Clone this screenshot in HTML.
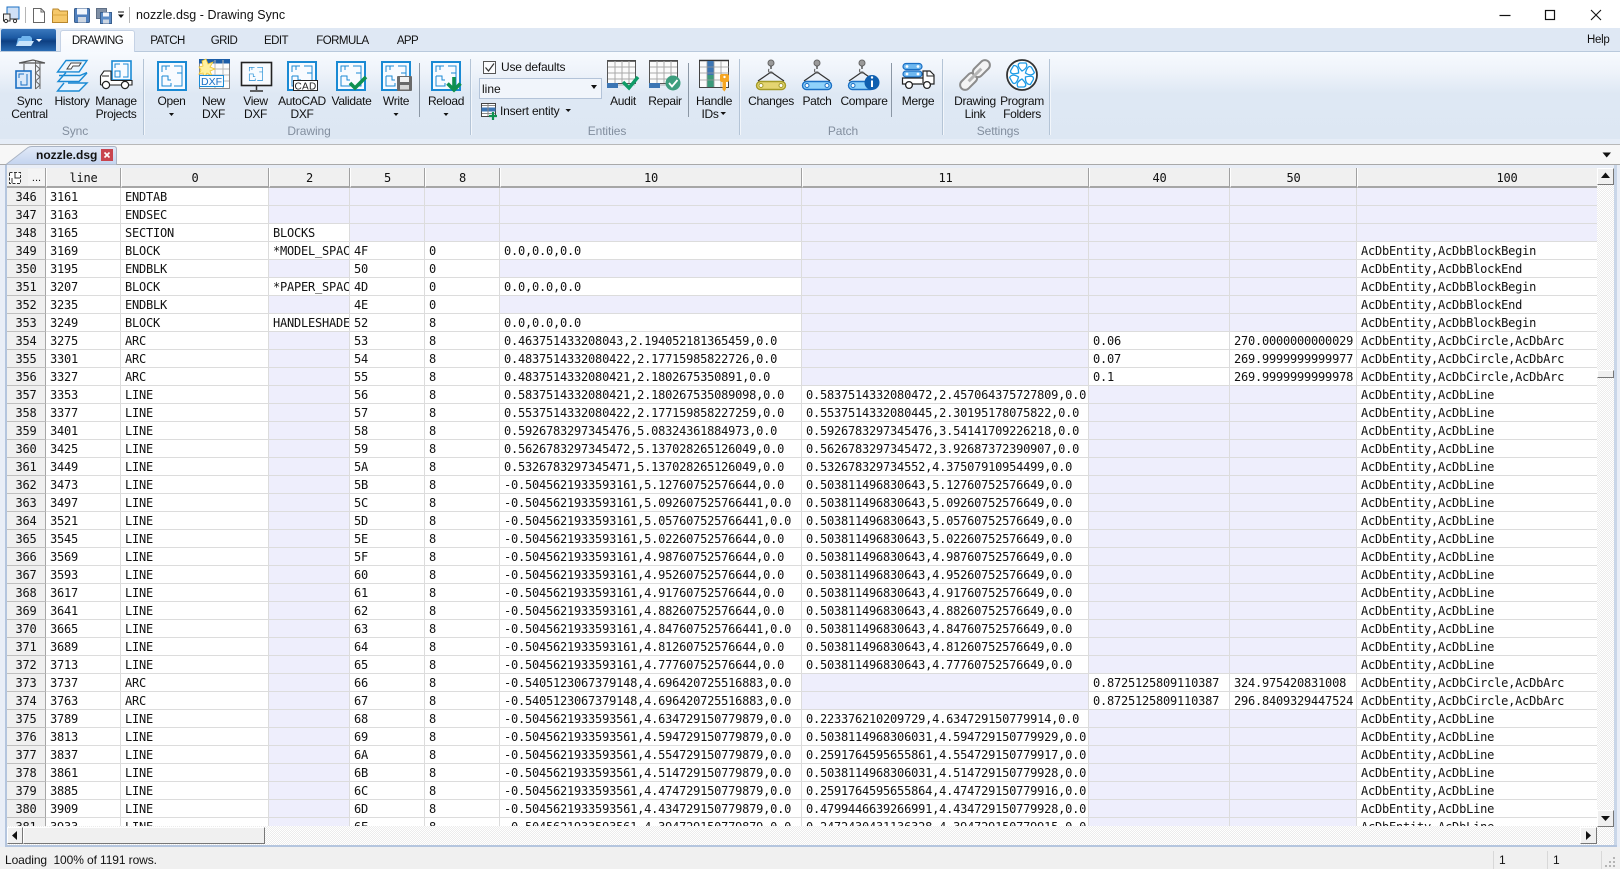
<!DOCTYPE html>
<html>
<head>
<meta charset="utf-8">
<title>nozzle.dsg - Drawing Sync</title>
<style>
html,body{margin:0;padding:0;width:1620px;height:869px;overflow:hidden;background:#fff}
body{position:relative;font-family:"Liberation Sans",sans-serif;font-size:12px;color:#111}
.a{position:absolute}
.lb{position:absolute;transform:translateX(-50%);white-space:nowrap;text-align:center;font-size:12px;letter-spacing:-.32px;line-height:13px;color:#111}
.g{position:absolute;transform:translateX(-50%);white-space:nowrap;font-size:12px;letter-spacing:-.1px;color:#828e9e;line-height:14px;top:124px}
.t{position:absolute;transform:translateX(-50%);white-space:nowrap;font-size:11.5px;letter-spacing:-.55px;top:34px;line-height:14px;color:#111}
.gs{position:absolute;top:59px;height:76px;width:1px;background:#b4c4d6;box-shadow:1px 0 0 #f2f6fb}
.is{position:absolute;top:63px;height:54px;width:1px;background:#8b97a5}
.btn{position:absolute;background:#f0f0f0;border-left:1px solid #fff;border-top:1px solid #fff;border-right:1px solid #777;border-bottom:1px solid #777;box-sizing:border-box}
.dith{background:repeating-conic-gradient(#fff 0 25%,#ececec 0 50%) 0 0/2px 2px}
table{border-collapse:separate;border-spacing:0;table-layout:fixed;width:1650px;font-family:"DejaVu Sans Mono","Liberation Mono",monospace;font-size:12px;letter-spacing:-.22px;color:#111}
td,th{box-sizing:border-box;height:18px;padding:2px 0 0 4px;overflow:hidden;white-space:nowrap;font-weight:normal;text-align:left;border-right:1px solid #dcdcdc;border-bottom:1px solid #dcdcdc;line-height:15px;background:#fff}
td.e{background:#eeeefc}
th.r{background:#f0f0f0;text-align:center;padding:2px 0 0;border-right:1px solid #a6a6a6;border-bottom:1px solid #c0c0c0}
thead th{height:20px;background:#f0f0f0;text-align:center;padding:2px 0 0;border-left:1px solid #fff;border-right:1px solid #a0a0a0;border-bottom:2px solid #a6a6a6;line-height:16px}
</style>
</head>
<body>

<!-- ribbon backgrounds -->
<div class="a" style="left:0;top:28px;width:1620px;height:23px;background:#dfe8f4"></div>
<div class="a" style="left:0;top:51px;width:1620px;height:1px;background:#b9c9dc"></div>
<div class="a" style="left:0;top:52px;width:1620px;height:87px;background:linear-gradient(#f7fafe 0,#eef3fa 20px,#dee8f4 42px,#dde7f3 100%)"></div>
<div class="a" style="left:0;top:139px;width:1620px;height:5px;background:#e6edf7"></div>

<!-- file button and tabs -->
<div class="a" style="left:1px;top:29px;width:55px;height:22px;border-radius:2px 2px 0 0;background:linear-gradient(#3a78bd 0,#1c5aa3 40%,#0e3f82 55%,#2a6cb4 100%)"></div>
<div class="a" style="left:60px;top:30px;width:75px;height:22px;box-sizing:border-box;border:1px solid #c5d2e5;border-bottom:0;border-radius:3px 3px 0 0;background:linear-gradient(#fff,#f6f9fe)"></div>
<div class="t" style="left:97.5px">DRAWING</div>
<div class="t" style="left:167.5px">PATCH</div>
<div class="t" style="left:224px">GRID</div>
<div class="t" style="left:276px">EDIT</div>
<div class="t" style="left:342.5px">FORMULA</div>
<div class="t" style="left:407.5px">APP</div>
<div class="a" style="left:1587px;top:33px;font-size:11.5px;letter-spacing:-.3px;line-height:14px">Help</div>

<!-- title -->
<div class="a" style="left:136px;top:8px;font-size:12.5px;line-height:15px;white-space:nowrap;letter-spacing:.05px">nozzle.dsg - Drawing Sync</div>

<!-- separators -->
<div class="gs" style="left:143px"></div>
<div class="gs" style="left:470px"></div>
<div class="gs" style="left:739px"></div>
<div class="gs" style="left:942px"></div>
<div class="gs" style="left:1049px"></div>
<div class="is" style="left:419px"></div>
<div class="is" style="left:688px"></div>
<div class="is" style="left:891px"></div>

<!-- labels -->
<div class="lb" style="left:29.5px;top:95px">Sync<br>Central</div>
<div class="lb" style="left:72px;top:95px">History</div>
<div class="lb" style="left:116px;top:95px">Manage<br>Projects</div>
<div class="lb" style="left:171.5px;top:95px">Open</div>
<div class="lb" style="left:213.5px;top:95px">New<br>DXF</div>
<div class="lb" style="left:255.5px;top:95px">View<br>DXF</div>
<div class="lb" style="left:302px;top:95px">AutoCAD<br>DXF</div>
<div class="lb" style="left:351.5px;top:95px">Validate</div>
<div class="lb" style="left:396px;top:95px">Write</div>
<div class="lb" style="left:446px;top:95px">Reload</div>
<div class="lb" style="left:623px;top:95px">Audit</div>
<div class="lb" style="left:665px;top:95px">Repair</div>
<div class="lb" style="left:714px;top:95px">Handle</div>
<div class="lb" style="left:710px;top:108px">IDs</div>
<div class="lb" style="left:771px;top:95px">Changes</div>
<div class="lb" style="left:817px;top:95px">Patch</div>
<div class="lb" style="left:864px;top:95px">Compare</div>
<div class="lb" style="left:918px;top:95px">Merge</div>
<div class="lb" style="left:975px;top:95px">Drawing<br>Link</div>
<div class="lb" style="left:1022px;top:95px">Program<br>Folders</div>
<div class="g" style="left:75px">Sync</div>
<div class="g" style="left:309px">Drawing</div>
<div class="g" style="left:607px">Entities</div>
<div class="g" style="left:843px">Patch</div>
<div class="g" style="left:998px">Settings</div>

<!-- entities controls -->
<div class="a" style="left:483px;top:61px;width:13px;height:13px;box-sizing:border-box;border:1px solid #555;background:#fbfcfe"></div>
<div class="a" style="left:501px;top:60px;font-size:12px;letter-spacing:-.2px;line-height:14px">Use defaults</div>
<div class="a" style="left:479px;top:78px;width:123px;height:21px;box-sizing:border-box;border:1px solid #b3c3d8;background:#f1f5fb"></div>
<div class="a" style="left:482px;top:82px;font-size:12px;line-height:14px">line</div>
<div class="a" style="left:500px;top:104px;font-size:12px;letter-spacing:-.2px;line-height:14px">Insert entity</div>

<!-- doc tab strip -->
<div class="a" style="left:0;top:144px;width:1620px;height:1px;background:#b8b8b8"></div>
<div class="a" style="left:0;top:145px;width:1620px;height:19px;background:#f7f7f7"></div>
<div class="a" style="left:0;top:164px;width:1620px;height:1px;background:#a9a9a9"></div>
<div class="a" style="left:0;top:165px;width:1620px;height:685px;background:#e9eef7"></div>
<div class="a" style="left:5px;top:165px;width:2px;height:682px;background:#b4c5de"></div>
<div class="a" style="left:1614px;top:165px;width:3px;height:682px;background:#c9d6e8"></div>
<div class="a" style="left:5px;top:845px;width:1612px;height:2px;background:#b4c5de"></div>

<!-- grid -->
<div class="a dith" style="left:1597px;top:168px;width:17px;height:677px"></div>
<div class="a dith" style="left:7px;top:826px;width:1590px;height:19px"></div>
<div class="a" style="left:7px;top:168px;width:1590px;height:658px;overflow:hidden;background:#fff">
<table>
<colgroup><col style="width:39px"><col style="width:75px"><col style="width:148px"><col style="width:81px"><col style="width:75px"><col style="width:75px"><col style="width:302px"><col style="width:287px"><col style="width:141px"><col style="width:127px"><col style="width:300px"></colgroup>
<thead><tr><th></th><th>line</th><th>0</th><th>2</th><th>5</th><th>8</th><th>10</th><th>11</th><th>40</th><th>50</th><th>100</th></tr></thead>
<tbody>
<tr><th class="r">346</th><td>3161</td><td>ENDTAB</td><td class="e"></td><td class="e"></td><td class="e"></td><td class="e"></td><td class="e"></td><td class="e"></td><td class="e"></td><td class="e"></td></tr>
<tr><th class="r">347</th><td>3163</td><td>ENDSEC</td><td class="e"></td><td class="e"></td><td class="e"></td><td class="e"></td><td class="e"></td><td class="e"></td><td class="e"></td><td class="e"></td></tr>
<tr><th class="r">348</th><td>3165</td><td>SECTION</td><td>BLOCKS</td><td class="e"></td><td class="e"></td><td class="e"></td><td class="e"></td><td class="e"></td><td class="e"></td><td class="e"></td></tr>
<tr><th class="r">349</th><td>3169</td><td>BLOCK</td><td>*MODEL_SPACE</td><td>4F</td><td>0</td><td>0.0,0.0,0.0</td><td class="e"></td><td class="e"></td><td class="e"></td><td>AcDbEntity,AcDbBlockBegin</td></tr>
<tr><th class="r">350</th><td>3195</td><td>ENDBLK</td><td class="e"></td><td>50</td><td>0</td><td class="e"></td><td class="e"></td><td class="e"></td><td class="e"></td><td>AcDbEntity,AcDbBlockEnd</td></tr>
<tr><th class="r">351</th><td>3207</td><td>BLOCK</td><td>*PAPER_SPACE</td><td>4D</td><td>0</td><td>0.0,0.0,0.0</td><td class="e"></td><td class="e"></td><td class="e"></td><td>AcDbEntity,AcDbBlockBegin</td></tr>
<tr><th class="r">352</th><td>3235</td><td>ENDBLK</td><td class="e"></td><td>4E</td><td>0</td><td class="e"></td><td class="e"></td><td class="e"></td><td class="e"></td><td>AcDbEntity,AcDbBlockEnd</td></tr>
<tr><th class="r">353</th><td>3249</td><td>BLOCK</td><td>HANDLESHADE</td><td>52</td><td>8</td><td>0.0,0.0,0.0</td><td class="e"></td><td class="e"></td><td class="e"></td><td>AcDbEntity,AcDbBlockBegin</td></tr>
<tr><th class="r">354</th><td>3275</td><td>ARC</td><td class="e"></td><td>53</td><td>8</td><td>0.463751433208043,2.194052181365459,0.0</td><td class="e"></td><td>0.06</td><td>270.0000000000029</td><td>AcDbEntity,AcDbCircle,AcDbArc</td></tr>
<tr><th class="r">355</th><td>3301</td><td>ARC</td><td class="e"></td><td>54</td><td>8</td><td>0.4837514332080422,2.17715985822726,0.0</td><td class="e"></td><td>0.07</td><td>269.9999999999977</td><td>AcDbEntity,AcDbCircle,AcDbArc</td></tr>
<tr><th class="r">356</th><td>3327</td><td>ARC</td><td class="e"></td><td>55</td><td>8</td><td>0.4837514332080421,2.1802675350891,0.0</td><td class="e"></td><td>0.1</td><td>269.9999999999978</td><td>AcDbEntity,AcDbCircle,AcDbArc</td></tr>
<tr><th class="r">357</th><td>3353</td><td>LINE</td><td class="e"></td><td>56</td><td>8</td><td>0.5837514332080421,2.180267535089098,0.0</td><td>0.5837514332080472,2.457064375727809,0.0</td><td class="e"></td><td class="e"></td><td>AcDbEntity,AcDbLine</td></tr>
<tr><th class="r">358</th><td>3377</td><td>LINE</td><td class="e"></td><td>57</td><td>8</td><td>0.5537514332080422,2.177159858227259,0.0</td><td>0.5537514332080445,2.30195178075822,0.0</td><td class="e"></td><td class="e"></td><td>AcDbEntity,AcDbLine</td></tr>
<tr><th class="r">359</th><td>3401</td><td>LINE</td><td class="e"></td><td>58</td><td>8</td><td>0.5926783297345476,5.08324361884973,0.0</td><td>0.5926783297345476,3.54141709226218,0.0</td><td class="e"></td><td class="e"></td><td>AcDbEntity,AcDbLine</td></tr>
<tr><th class="r">360</th><td>3425</td><td>LINE</td><td class="e"></td><td>59</td><td>8</td><td>0.5626783297345472,5.137028265126049,0.0</td><td>0.5626783297345472,3.92687372390907,0.0</td><td class="e"></td><td class="e"></td><td>AcDbEntity,AcDbLine</td></tr>
<tr><th class="r">361</th><td>3449</td><td>LINE</td><td class="e"></td><td>5A</td><td>8</td><td>0.5326783297345471,5.137028265126049,0.0</td><td>0.532678329734552,4.37507910954499,0.0</td><td class="e"></td><td class="e"></td><td>AcDbEntity,AcDbLine</td></tr>
<tr><th class="r">362</th><td>3473</td><td>LINE</td><td class="e"></td><td>5B</td><td>8</td><td>-0.5045621933593161,5.12760752576644,0.0</td><td>0.503811496830643,5.12760752576649,0.0</td><td class="e"></td><td class="e"></td><td>AcDbEntity,AcDbLine</td></tr>
<tr><th class="r">363</th><td>3497</td><td>LINE</td><td class="e"></td><td>5C</td><td>8</td><td>-0.5045621933593161,5.092607525766441,0.0</td><td>0.503811496830643,5.09260752576649,0.0</td><td class="e"></td><td class="e"></td><td>AcDbEntity,AcDbLine</td></tr>
<tr><th class="r">364</th><td>3521</td><td>LINE</td><td class="e"></td><td>5D</td><td>8</td><td>-0.5045621933593161,5.057607525766441,0.0</td><td>0.503811496830643,5.05760752576649,0.0</td><td class="e"></td><td class="e"></td><td>AcDbEntity,AcDbLine</td></tr>
<tr><th class="r">365</th><td>3545</td><td>LINE</td><td class="e"></td><td>5E</td><td>8</td><td>-0.5045621933593161,5.02260752576644,0.0</td><td>0.503811496830643,5.02260752576649,0.0</td><td class="e"></td><td class="e"></td><td>AcDbEntity,AcDbLine</td></tr>
<tr><th class="r">366</th><td>3569</td><td>LINE</td><td class="e"></td><td>5F</td><td>8</td><td>-0.5045621933593161,4.98760752576644,0.0</td><td>0.503811496830643,4.98760752576649,0.0</td><td class="e"></td><td class="e"></td><td>AcDbEntity,AcDbLine</td></tr>
<tr><th class="r">367</th><td>3593</td><td>LINE</td><td class="e"></td><td>60</td><td>8</td><td>-0.5045621933593161,4.95260752576644,0.0</td><td>0.503811496830643,4.95260752576649,0.0</td><td class="e"></td><td class="e"></td><td>AcDbEntity,AcDbLine</td></tr>
<tr><th class="r">368</th><td>3617</td><td>LINE</td><td class="e"></td><td>61</td><td>8</td><td>-0.5045621933593161,4.91760752576644,0.0</td><td>0.503811496830643,4.91760752576649,0.0</td><td class="e"></td><td class="e"></td><td>AcDbEntity,AcDbLine</td></tr>
<tr><th class="r">369</th><td>3641</td><td>LINE</td><td class="e"></td><td>62</td><td>8</td><td>-0.5045621933593161,4.88260752576644,0.0</td><td>0.503811496830643,4.88260752576649,0.0</td><td class="e"></td><td class="e"></td><td>AcDbEntity,AcDbLine</td></tr>
<tr><th class="r">370</th><td>3665</td><td>LINE</td><td class="e"></td><td>63</td><td>8</td><td>-0.5045621933593161,4.847607525766441,0.0</td><td>0.503811496830643,4.84760752576649,0.0</td><td class="e"></td><td class="e"></td><td>AcDbEntity,AcDbLine</td></tr>
<tr><th class="r">371</th><td>3689</td><td>LINE</td><td class="e"></td><td>64</td><td>8</td><td>-0.5045621933593161,4.81260752576644,0.0</td><td>0.503811496830643,4.81260752576649,0.0</td><td class="e"></td><td class="e"></td><td>AcDbEntity,AcDbLine</td></tr>
<tr><th class="r">372</th><td>3713</td><td>LINE</td><td class="e"></td><td>65</td><td>8</td><td>-0.5045621933593161,4.77760752576644,0.0</td><td>0.503811496830643,4.77760752576649,0.0</td><td class="e"></td><td class="e"></td><td>AcDbEntity,AcDbLine</td></tr>
<tr><th class="r">373</th><td>3737</td><td>ARC</td><td class="e"></td><td>66</td><td>8</td><td>-0.5405123067379148,4.696420725516883,0.0</td><td class="e"></td><td>0.8725125809110387</td><td>324.975420831008</td><td>AcDbEntity,AcDbCircle,AcDbArc</td></tr>
<tr><th class="r">374</th><td>3763</td><td>ARC</td><td class="e"></td><td>67</td><td>8</td><td>-0.5405123067379148,4.696420725516883,0.0</td><td class="e"></td><td>0.8725125809110387</td><td>296.8409329447524</td><td>AcDbEntity,AcDbCircle,AcDbArc</td></tr>
<tr><th class="r">375</th><td>3789</td><td>LINE</td><td class="e"></td><td>68</td><td>8</td><td>-0.5045621933593561,4.634729150779879,0.0</td><td>0.223376210209729,4.634729150779914,0.0</td><td class="e"></td><td class="e"></td><td>AcDbEntity,AcDbLine</td></tr>
<tr><th class="r">376</th><td>3813</td><td>LINE</td><td class="e"></td><td>69</td><td>8</td><td>-0.5045621933593561,4.594729150779879,0.0</td><td>0.5038114968306031,4.594729150779929,0.0</td><td class="e"></td><td class="e"></td><td>AcDbEntity,AcDbLine</td></tr>
<tr><th class="r">377</th><td>3837</td><td>LINE</td><td class="e"></td><td>6A</td><td>8</td><td>-0.5045621933593561,4.554729150779879,0.0</td><td>0.2591764595655861,4.554729150779917,0.0</td><td class="e"></td><td class="e"></td><td>AcDbEntity,AcDbLine</td></tr>
<tr><th class="r">378</th><td>3861</td><td>LINE</td><td class="e"></td><td>6B</td><td>8</td><td>-0.5045621933593561,4.514729150779879,0.0</td><td>0.5038114968306031,4.514729150779928,0.0</td><td class="e"></td><td class="e"></td><td>AcDbEntity,AcDbLine</td></tr>
<tr><th class="r">379</th><td>3885</td><td>LINE</td><td class="e"></td><td>6C</td><td>8</td><td>-0.5045621933593561,4.474729150779879,0.0</td><td>0.2591764595655864,4.474729150779916,0.0</td><td class="e"></td><td class="e"></td><td>AcDbEntity,AcDbLine</td></tr>
<tr><th class="r">380</th><td>3909</td><td>LINE</td><td class="e"></td><td>6D</td><td>8</td><td>-0.5045621933593561,4.434729150779879,0.0</td><td>0.4799446639266991,4.434729150779928,0.0</td><td class="e"></td><td class="e"></td><td>AcDbEntity,AcDbLine</td></tr>
<tr><th class="r">381</th><td>3933</td><td>LINE</td><td class="e"></td><td>6E</td><td>8</td><td>-0.5045621933593561,4.394729150779879,0.0</td><td>0.2472430431136328,4.394729150779915,0.0</td><td class="e"></td><td class="e"></td><td>AcDbEntity,AcDbLine</td></tr>
</tbody>
</table>
</div>

<!-- top-left header cell -->
<div class="a" style="left:7px;top:168px;width:39px;height:20px;box-sizing:border-box;background:#f0f0f0;border-right:1px solid #a0a0a0;border-bottom:2px solid #a6a6a6"></div>
<div class="a" style="left:28px;top:169px;width:17px;height:17px;background:#f4f4f4;font-size:11px;line-height:18px;text-align:center;font-family:'Liberation Sans',sans-serif">...</div>

<!-- scrollbars -->
<div class="btn" style="left:1597px;top:168px;width:17px;height:17px"></div>
<div class="btn" style="left:1597px;top:370px;width:17px;height:8px"></div>
<div class="btn" style="left:1597px;top:810px;width:17px;height:17px"></div>
<div class="btn" style="left:7px;top:827px;width:16px;height:17px"></div>
<div class="btn" style="left:23px;top:827px;width:242px;height:17px"></div>
<div class="btn" style="left:1580px;top:827px;width:17px;height:17px"></div>

<!-- status bar -->
<div class="a" style="left:0;top:847px;width:1620px;height:22px;background:#f0f0f0"></div>
<div class="a" style="left:5px;top:853px;font-size:12px;line-height:14px;white-space:nowrap;letter-spacing:-.1px">Loading&nbsp; 100% of 1191 rows.</div>
<div class="a" style="left:1493px;top:851px;width:1px;height:18px;background:#d8d8d8"></div>
<div class="a" style="left:1547px;top:851px;width:1px;height:18px;background:#d8d8d8"></div>
<div class="a" style="left:1601px;top:851px;width:1px;height:18px;background:#d8d8d8"></div>
<div class="a" style="left:1499px;top:853px;font-size:12px;line-height:14px">1</div>
<div class="a" style="left:1553px;top:853px;font-size:12px;line-height:14px">1</div>

<!-- all icons, drawn in page coordinates -->
<svg class="a" style="left:0;top:0" width="1620" height="869" viewBox="0 0 1620 869" fill="none">
<defs>
<g id="plan" stroke="#1a8ad4" stroke-width="1" fill="none">
<path d="M5 11V5H13M9 5V9M17 5H25V25H17M25 12H20M5 15H11V19H14M5 15V25H14V22"/>
</g>
<g id="bp">
<rect x="1" y="1" width="28" height="28" fill="#f8fbff" stroke="#1a8ad4" stroke-width="2"/>
<use href="#plan"/>
</g>
<g id="sheet">
<rect x=".5" y=".5" width="28" height="23" fill="#fbfbfb" stroke="#555"/>
<path d="M1 1H29" stroke="#444" stroke-width="1.6"/>
<path d="M1 7H28M1 13H28M1 19H28M8 1V23M15 1V23M22 1V23" stroke="#a9a9a9"/>
<rect x="0" y="23" width="11" height="5" fill="#3d76b4"/>
<path d="M11 25H28" stroke="#b5b5b5"/>
</g>
<g id="hook">
<circle cx="0" cy="3" r="3" fill="#9a9a9a" stroke="#666"/>
<path d="M0 6V9M-13 21L0 12L13 21" stroke="#333" stroke-width="1.2"/>
<path d="M-2 9A2.5 2.5 0 1 0 2 12" stroke="#666" stroke-width="1.2"/>
</g>
<linearGradient id="tabg" x1="0" y1="0" x2="0" y2="1"><stop offset="0" stop-color="#e2eaf8"/><stop offset="1" stop-color="#c4d4ef"/></linearGradient>
</defs>

<!-- quick access toolbar -->
<g>
<rect x="7" y="7" width="12" height="12" fill="#cfe0f5" stroke="#1a6fc4"/>
<path d="M3.5 14H10V21H3.5Z" fill="#eee" stroke="#333"/>
<circle cx="6" cy="21" r="1.6" fill="#fff" stroke="#333"/><circle cx="15" cy="21" r="1.6" fill="#fff" stroke="#333"/>
<path d="M10 19H18" stroke="#333"/>
<path d="M25.5 7V23" stroke="#b5b5b5"/>
<path d="M33.5 8.5H41L44.5 12V22.5H33.5Z" fill="#fff" stroke="#666"/><path d="M41 8.5V12H44.5" stroke="#666"/>
<path d="M52.5 12V22.5H67.5V11H60L58 9H53Z" fill="#f6c869" stroke="#b8862c"/><path d="M52.5 15H67.5" stroke="#d9a640"/>
<rect x="74.5" y="8.5" width="15" height="14" rx="1" fill="#4f7fbd" stroke="#3a5f8e"/><rect x="77" y="8.5" width="10" height="6" fill="#f2f6fc"/><rect x="78" y="17" width="8" height="5.5" fill="#cdd6e2"/>
<rect x="96.5" y="8.5" width="10" height="10" fill="#7f8fa5" stroke="#5f6f85"/><rect x="100.5" y="12.5" width="11" height="11" fill="#5a8bc6" stroke="#3a5f8e"/><rect x="103" y="12.5" width="6" height="4" fill="#f2f6fc"/><rect x="103" y="19.5" width="6" height="4" fill="#cdd6e2"/>
<path d="M118 12H124" stroke="#111" stroke-width="1"/><path d="M118 14.5H124L121 18Z" fill="#111"/>
<path d="M129.5 7V23" stroke="#b5b5b5"/>
</g>

<!-- window controls -->
<path d="M1499.5 15.5H1510.5" stroke="#111" stroke-width="1.2"/>
<rect x="1545.5" y="10.5" width="9" height="9" stroke="#111" stroke-width="1.2"/>
<path d="M1591 10L1601 20M1601 10L1591 20" stroke="#111" stroke-width="1.1"/>

<!-- file button folder -->
<path d="M16 46L18 38H21L22 36H30L32 38V44L31 46Z" fill="#6fb4ee"/><path d="M16 46L19 41H34L31 46Z" fill="#c9e4fb"/>
<path d="M36 39H42L39 42Z" fill="#fff"/>

<!-- Sync Central -->
<path d="M19 63H45M33 60L19 63M33 60L45 63" stroke="#555" stroke-width="1.2"/>
<path d="M35.5 61V89M40 61V89M35.5 65L40 69L35.5 73L40 77L35.5 81L40 85L35.5 89" stroke="#666"/>
<path d="M24 64V71" stroke="#555"/>
<rect x="16" y="71" width="15" height="17" fill="#dbe9f9" stroke="#1a6fc4" stroke-width="1.6"/>
<path d="M19 78V74H24M27 74V85H21V81" stroke="#1a6fc4"/>

<!-- History -->
<path d="M66 60.5H87L79 72H57.5Z" fill="#eaf5fd" stroke="#1a8ad4" stroke-width="1.4"/>
<path d="M67 69L71 63H81L79 66H73L71 69Z" fill="#fff" stroke="#444"/>
<path d="M59 75.5H80L87 72.5M66 72.5L58 81.5H79L87 73" stroke="#1a8ad4" stroke-width="1.4" fill="#eaf5fd"/>
<path d="M64 83L57.5 91H79L87 83H68" stroke="#1a8ad4" stroke-width="1.4" fill="#eaf5fd"/>

<!-- Manage Projects -->
<rect x="112" y="61" width="19" height="19" fill="#f8fbff" stroke="#1a8ad4" stroke-width="1.6"/>
<path d="M115 68V64H120M123 64H128V77H123M115 71H120V77H115Z" stroke="#1a8ad4"/>
<path d="M100.5 85V76L104 71H111V85M102 76H109" stroke="#222" stroke-width="1.1" fill="#fff"/>
<path d="M111 80.5H132V85H100.5" stroke="#222" stroke-width="1.1" fill="#fff"/>
<circle cx="106" cy="85" r="3.6" fill="#fff" stroke="#222" stroke-width="1.2"/><circle cx="125" cy="85" r="3.6" fill="#fff" stroke="#222" stroke-width="1.2"/>

<!-- Open -->
<use href="#bp" x="157" y="61"/>
<path d="M169 113H174L171.5 116Z" fill="#111"/>

<!-- New DXF -->
<rect x="199.5" y="59.5" width="30" height="29" fill="#fcfcfc" stroke="#888"/>
<rect x="199" y="59" width="31" height="4.5" fill="#1d5ea7"/>
<path d="M200 69H229M200 75H229M200 81H229M215 60V88M223 60V88" stroke="#b8b8b8"/>
<path d="M206 59L208 64L213 62L210 67L215 69L210 71L212 76L207 73L204 78L203 73L199 74L201 70L199 67L203 66L202 61Z" fill="#fff1a0" stroke="#efc52e" stroke-width=".8"/>
<rect x="199.5" y="75.5" width="24" height="11" fill="#f7fbff" stroke="#1a8ad4"/>
<text x="211.5" y="85" text-anchor="middle" font-family="Liberation Sans,sans-serif" font-size="10.5" fill="#1a6fc4">DXF</text>

<!-- View DXF -->
<rect x="241.5" y="62.5" width="30" height="23" fill="#f8fbff" stroke="#222" stroke-width="1.6"/>
<g transform="translate(246,64) scale(.66)"><use href="#plan"/></g>
<path d="M256.5 86V90M250 91H263" stroke="#333" stroke-width="1.5"/>

<!-- AutoCAD DXF -->
<use href="#bp" x="287" y="61"/>
<rect x="293.5" y="80.5" width="24" height="10" fill="#fff" stroke="#222"/>
<text x="305.5" y="89.5" text-anchor="middle" font-family="Liberation Sans,sans-serif" font-size="10" letter-spacing=".3" fill="#222">CAD</text>

<!-- Validate -->
<use href="#bp" x="336" y="61"/>
<path d="M350 83L355 88L366 77" stroke="#0f9150" stroke-width="3.6"/>

<!-- Write -->
<use href="#bp" x="381" y="61"/>
<rect x="397" y="76" width="15" height="15" rx="1" fill="#6a6a6a"/>
<rect x="400" y="77" width="9" height="5" fill="#f2f2f2"/><rect x="400" y="85" width="9" height="4.5" fill="#d8d8d8"/>
<path d="M393.5 113H398.5L396 116Z" fill="#111"/>

<!-- Reload -->
<use href="#bp" x="431" y="61"/>
<path d="M454 77V90M447.5 83.5L454 90L460.5 83.5" stroke="#0f9150" stroke-width="3.6"/>
<path d="M443.5 113H448.5L446 116Z" fill="#111"/>

<!-- Use defaults check -->
<path d="M485.5 67.5L488.5 71L494 63.5" stroke="#333" stroke-width="1.2"/>
<path d="M591 85H597L594 89Z" fill="#111"/>

<!-- Insert entity -->
<rect x="481.5" y="103.5" width="14" height="13" fill="#fff" stroke="#444"/>
<rect x="481.5" y="107.5" width="14" height="4" fill="#3d76b4"/>
<path d="M482 105.5H495M482 113.5H495M488 104V116" stroke="#888"/>
<path d="M493 112V120M489 116H497" stroke="#0f9150" stroke-width="2.2"/>
<path d="M565.5 109H571L568.2 112Z" fill="#111"/>

<!-- Audit -->
<use href="#sheet" x="607" y="60"/>
<path d="M623 82L629 88L638 77" stroke="#0f9c68" stroke-width="3.4"/>

<!-- Repair -->
<use href="#sheet" x="649" y="60"/>
<circle cx="673" cy="83" r="7.5" fill="#3d9e7e"/>
<path d="M669 83L672 86.5L677.5 80" stroke="#fff" stroke-width="1.8"/>

<!-- Handle IDs -->
<rect x="699.5" y="60.5" width="29" height="27" fill="#fbfbfb" stroke="#444"/>
<path d="M699 60.5H729" stroke="#333" stroke-width="1.5"/>
<rect x="707" y="61" width="7" height="14" fill="#3d76b4"/><rect x="707" y="75" width="7" height="12" fill="#3b9a7a"/>
<path d="M700 67H729M700 73H729M700 80H729M707 61V87M714 61V87M721 61V87" stroke="#999" stroke-width=".8"/>
<path d="M720 75A2 2 0 0 1 722 74H727A2 2 0 0 1 729 76V80A2 2 0 0 1 727 82H726V89L724.5 91.5L722.5 89.5V82H722A2 2 0 0 1 720 80Z" fill="#f6a623"/>
<circle cx="724.5" cy="77" r="1.2" fill="#fff"/>
<path d="M720.5 112H726L723.2 115Z" fill="#111"/>

<!-- Changes -->
<use href="#hook" x="771" y="60"/>
<rect x="756.5" y="81.5" width="29" height="8" rx="4" fill="#e4d572" stroke="#a39a26" stroke-width="1.4"/>
<circle cx="761" cy="85.5" r="2" fill="#fff" stroke="#a39a26"/><circle cx="781" cy="85.5" r="2" fill="#fff" stroke="#a39a26"/>

<!-- Patch -->
<use href="#hook" x="817" y="60"/>
<rect x="802.5" y="81.5" width="29" height="8" rx="4" fill="#8fd2fb" stroke="#1a6fc4" stroke-width="1.4"/>
<circle cx="807" cy="85.5" r="2" fill="#fff" stroke="#1a6fc4"/><circle cx="827" cy="85.5" r="2" fill="#fff" stroke="#1a6fc4"/>

<!-- Compare -->
<use href="#hook" x="862" y="60"/>
<rect x="848.5" y="81.5" width="26" height="8" rx="4" fill="#8fd2fb" stroke="#1a6fc4" stroke-width="1.4"/>
<circle cx="853" cy="85.5" r="2" fill="#fff" stroke="#1a6fc4"/>
<circle cx="872" cy="82.5" r="7.5" fill="#0f5fb0"/>
<path d="M872 80.5V87" stroke="#fff" stroke-width="2"/><circle cx="872" cy="77.5" r="1.2" fill="#fff"/>

<!-- Merge -->
<rect x="903" y="63.5" width="19" height="6" rx="3" fill="#6fb8ef" stroke="#1a6fc4" stroke-width="1.2"/>
<rect x="903" y="71" width="19" height="6" rx="3" fill="#6fb8ef" stroke="#1a6fc4" stroke-width="1.2"/>
<circle cx="907" cy="66.5" r="1.4" fill="#fff"/><circle cx="918" cy="66.5" r="1.4" fill="#fff"/><circle cx="907" cy="74" r="1.4" fill="#fff"/><circle cx="918" cy="74" r="1.4" fill="#fff"/>
<path d="M923 83V71H930L934 75V84H902.5V78H923" stroke="#222" stroke-width="1.2" fill="#fff"/>
<path d="M927 71.5V76H934" stroke="#222"/>
<circle cx="909" cy="85" r="3.4" fill="#fff" stroke="#222" stroke-width="1.3"/><circle cx="927" cy="85" r="3.4" fill="#fff" stroke="#222" stroke-width="1.3"/>

<!-- Drawing Link -->
<g transform="rotate(-45 975 75)" fill="#f4f4f4" stroke="#8c8c8c" stroke-width="2">
<rect x="956" y="70" width="20" height="10" rx="5"/>
<rect x="974" y="70" width="20" height="10" rx="5"/>
<path d="M966 75H984" stroke="#b5b5b5" stroke-width="3"/>
</g>

<!-- Program Folders -->
<circle cx="1022" cy="75" r="15" fill="#fafdff" stroke="#333" stroke-width="1.8"/>
<g stroke="#1d9be6" stroke-width="1.3" fill="#fff">
<path d="M1022 71C1018 67 1017 64 1020 63L1026 63C1028 66 1026 69 1022 71Z"/>
<path d="M1022 71C1018 67 1017 64 1020 63L1026 63C1028 66 1026 69 1022 71Z" transform="rotate(60 1022 75)"/>
<path d="M1022 71C1018 67 1017 64 1020 63L1026 63C1028 66 1026 69 1022 71Z" transform="rotate(120 1022 75)"/>
<path d="M1022 71C1018 67 1017 64 1020 63L1026 63C1028 66 1026 69 1022 71Z" transform="rotate(180 1022 75)"/>
<path d="M1022 71C1018 67 1017 64 1020 63L1026 63C1028 66 1026 69 1022 71Z" transform="rotate(240 1022 75)"/>
<path d="M1022 71C1018 67 1017 64 1020 63L1026 63C1028 66 1026 69 1022 71Z" transform="rotate(300 1022 75)"/>
</g>

<!-- document tab -->
<path d="M6 164.5L28 147.5Q29.5 146.5 32 146.5H114Q116.5 146.5 116.5 149V164.5" fill="url(#tabg)" stroke="#aab4c4"/>
<text x="36" y="159" font-family="Liberation Sans,sans-serif" font-size="12" font-weight="bold" fill="#111">nozzle.dsg</text>
<rect x="101" y="149" width="12" height="12" fill="#c8444e"/>
<path d="M104.5 152.5L109.5 157.5M109.5 152.5L104.5 157.5" stroke="#fff" stroke-width="1.6"/>
<path d="M1602.5 152.5H1611L1606.7 157.5Z" fill="#111"/>

<!-- top-left grid cell icon -->
<rect x="9.5" y="172.5" width="11" height="11" fill="#fff" stroke="#333" stroke-dasharray="3 1.5"/>
<path d="M15 172V178H20M12 178V183" stroke="#333"/>

<!-- scroll arrows -->
<path d="M1605.5 172.5L1610 178H1601Z" fill="#111"/>
<path d="M1601 816H1610L1605.5 821Z" fill="#111"/>
<path d="M12 835.5L17 831V840Z" fill="#111"/>
<path d="M1591 835.5L1586 831V840Z" fill="#111"/>

<!-- size grip -->
<g fill="#b5b5b5"><rect x="1613" y="857" width="2" height="2"/><rect x="1613" y="861" width="2" height="2"/><rect x="1609" y="861" width="2" height="2"/><rect x="1613" y="865" width="2" height="2"/><rect x="1609" y="865" width="2" height="2"/><rect x="1605" y="865" width="2" height="2"/></g>
</svg>
</body>
</html>
